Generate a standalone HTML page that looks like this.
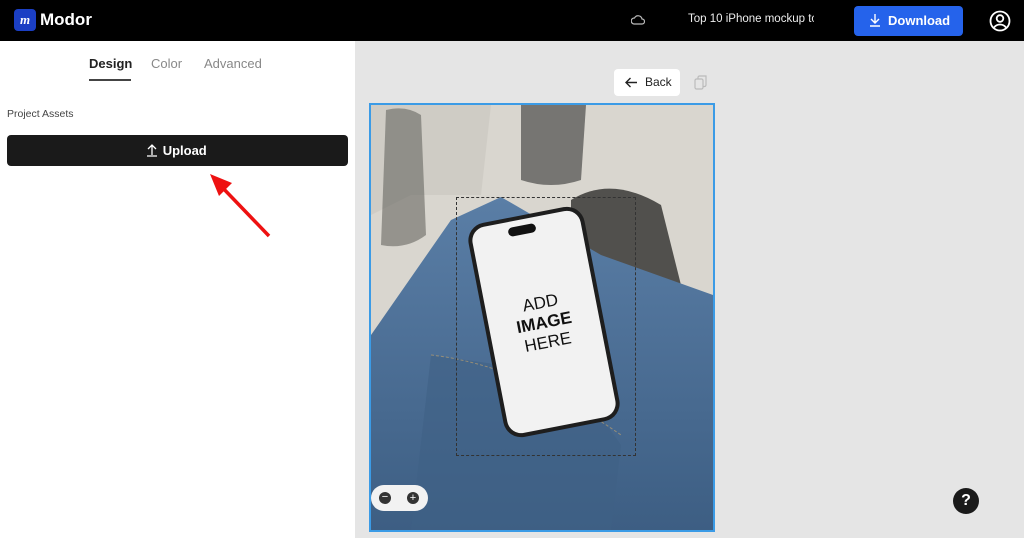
<!DOCTYPE html>
<html><head><style>
*{margin:0;padding:0;box-sizing:border-box}
html,body{width:1024px;height:538px;overflow:hidden}
body{font-family:"Liberation Sans",sans-serif;background:#e5e5e5;position:relative}
.top{position:absolute;left:0;top:0;width:1024px;height:41px;background:#000}
.side{position:absolute;left:0;top:41px;width:355px;height:497px;background:#fff}
.abs{position:absolute}
</style></head><body>
<div class="top">
 <div class="abs" style="left:14px;top:9px;width:22px;height:22px;background:#1b3fc4;border-radius:4px;color:#fff;font:italic bold 13px 'Liberation Serif',serif;text-align:center;line-height:21px">m</div>
 <div class="abs" style="left:40px;top:9px;color:#fff;font-weight:bold;font-size:17px;line-height:22px">Modor</div>
 <svg class="abs" style="left:631px;top:14px" width="14" height="12" viewBox="0 0 14 12"><path d="M3 10h8a2.5 2.5 0 0 0 0-5 4 4 0 0 0-7.5-1A3 3 0 0 0 3 10z" fill="none" stroke="#bbb" stroke-width="1.2"/></svg>
 <div class="abs" style="left:688px;top:13px;color:#eee;font-size:11.5px;width:126px;overflow:hidden;white-space:nowrap">Top 10 iPhone mockup to</div>
 <div class="abs" style="left:854px;top:6px;width:109px;height:30px;background:#2563eb;border-radius:4px;color:#fff;font-size:13px;font-weight:bold;line-height:30px;padding-left:34px">Download</div>
 <svg class="abs" style="left:869px;top:13px" width="12" height="14" viewBox="0 0 12 14"><path d="M6 1v9M2 6l4 4 4-4M1 13h10" fill="none" stroke="#fff" stroke-width="1.4"/></svg>
 <svg class="abs" style="left:989px;top:10px" width="22" height="22" viewBox="0 0 22 22"><circle cx="11" cy="11" r="9.5" fill="none" stroke="#fff" stroke-width="1.8"/><circle cx="11" cy="8.5" r="3.3" fill="none" stroke="#fff" stroke-width="1.8"/><path d="M5 17.5c3-4 9-4 12 0" fill="none" stroke="#fff" stroke-width="1.8"/></svg>
</div>
<div class="side">
 <div class="abs" style="left:89px;top:15px;font-size:13px;color:#222;font-weight:bold">Design</div>
 <div class="abs" style="left:89px;top:38px;width:42px;height:2px;background:#444"></div>
 <div class="abs" style="left:151px;top:15px;font-size:13px;color:#888">Color</div>
 <div class="abs" style="left:204px;top:15px;font-size:13px;color:#888">Advanced</div>
 <div class="abs" style="left:7px;top:67px;font-size:10.5px;color:#444">Project Assets</div>
 <div class="abs" style="left:7px;top:94px;width:341px;height:31px;background:#1a1a1a;border-radius:4px;color:#fff;font-size:13px;font-weight:bold;text-align:center;line-height:31px">&nbsp;&nbsp;&nbsp;&nbsp;Upload</div>
 <svg class="abs" style="left:146px;top:102px" width="12" height="14" viewBox="0 0 12 14"><path d="M6 12V3M2 6l4-4 4 4M1 13h10" fill="none" stroke="#fff" stroke-width="1.3"/></svg>
 <svg class="abs" style="left:205px;top:128px" width="70" height="72" viewBox="0 0 70 72"><path d="M64 67L14 15" stroke="#e11" stroke-width="3.5"/><path d="M5 5L27 14L14 27Z" fill="#e11"/></svg>
</div>
<div class="abs" style="left:614px;top:69px;width:66px;height:27px;background:#fff;border-radius:4px;font-size:12px;color:#222;line-height:27px;padding-left:31px">Back</div>
<svg class="abs" style="left:624px;top:76px" width="14" height="13" viewBox="0 0 14 13"><path d="M13 6.5H2M6.5 2L2 6.5 6.5 11" fill="none" stroke="#222" stroke-width="1.4"/></svg>
<svg class="abs" style="left:694px;top:75px" width="14" height="15" viewBox="0 0 14 15"><rect x="1" y="4" width="8" height="10" rx="1.5" fill="none" stroke="#bbb" stroke-width="1.2"/><path d="M4 4V2.5A1.5 1.5 0 0 1 5.5 1H12v9a1.5 1.5 0 0 1-1.5 1.5H9" fill="none" stroke="#bbb" stroke-width="1.2"/></svg>
<div class="abs" style="left:369px;top:103px;width:346px;height:429px;border:2px solid #3b9be6;overflow:hidden;background:#d8d5ce">
 <svg class="abs" style="left:0;top:0" width="342" height="425" viewBox="0 0 342 425">
  <defs><linearGradient id="dn" x1="0" y1="0" x2="0" y2="1"><stop offset="0" stop-color="#5a7ea6"/><stop offset="1" stop-color="#3d5e83"/></linearGradient></defs>
  <rect width="342" height="425" fill="#d9d6cf"/>
  <path d="M0 0H120L110 90 40 90 0 110Z" fill="#cfccc5"/>
  <path d="M15 5q20-5 35 5l5 120q-20 15-45 10z" fill="#5c5c58" opacity=".55"/>
  <path d="M150 0h65l-5 75q-30 10-60 0z" fill="#333" opacity=".6"/>
  <path d="M200 95q40-25 90 5l20 80-110 10z" fill="#2e2e2c" opacity=".8"/>
  <path d="M0 230L80 115 130 92 230 150 342 190V425H0Z" fill="url(#dn)"/>
  <path d="M60 250L200 270 250 340 240 425H40Z" fill="#3f6186" opacity=".6"/>
  <path d="M60 250Q150 260 250 330" fill="none" stroke="#c9a66b" stroke-width="1" stroke-dasharray="3 2" opacity=".6"/>
 </svg>
 <div class="abs" style="left:85px;top:92px;width:180px;height:259px;border:1px dashed #333"></div>
 <div class="abs" style="left:114px;top:108px;width:118px;height:218px;background:#1e1e1e;border-radius:18px;transform:rotate(-11deg);padding:4px">
  <div style="width:100%;height:100%;background:#f2f2f2;border-radius:14px;position:relative">
   <div class="abs" style="left:37px;top:6px;width:28px;height:9px;background:#111;border-radius:5px"></div>
   <div class="abs" style="left:0;top:76px;width:100%;text-align:center;font-size:17px;color:#111;line-height:20px">ADD<br><b>IMAGE</b><br>HERE</div>
  </div>
 </div>
 <div class="abs" style="left:0;top:380px;width:57px;height:26px;background:#f2f2f2;border-radius:13px"></div>
 <div class="abs" style="left:8px;top:387px;width:12px;height:12px;border-radius:50%;background:#333;color:#fff;font-size:11px;line-height:11px;text-align:center">−</div>
 <div class="abs" style="left:36px;top:387px;width:12px;height:12px;border-radius:50%;background:#333;color:#fff;font-size:11px;line-height:12px;text-align:center">+</div>
</div>
<div class="abs" style="left:953px;top:488px;width:26px;height:26px;border-radius:50%;background:#1a1a1a;color:#fff;font-weight:bold;font-size:16px;text-align:center;line-height:26px">?</div>
</body></html>
